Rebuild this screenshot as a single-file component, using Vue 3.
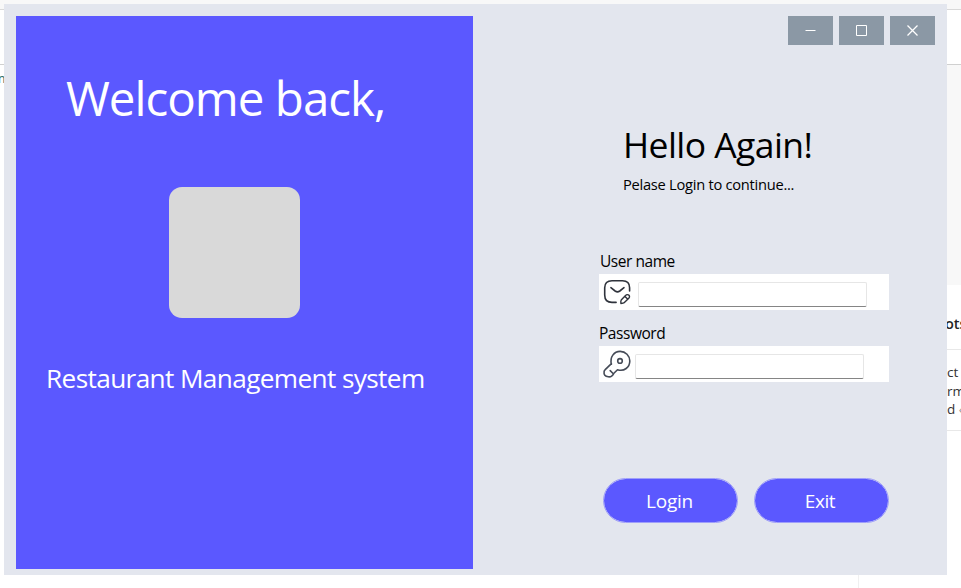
<script setup>
import { ref } from 'vue'

const username = ref('')
const password = ref('')
</script>

<template>
  <div class="desktop">
    <div class="page-behind">
      <div class="tabs-strip"></div>
      <div class="toolbar-strip"></div>
      <div class="body-strip">
        <div class="left-edge">n</div>
        <div class="right-edge">
          <div class="gray-block"></div>
          <div class="side-title">ots</div>
          <div class="side-lines">
            <div>ct</div>
            <div>rm</div>
            <div>d <span class="dim">‹</span></div>
          </div>
          <div class="side-rest"></div>
        </div>
      </div>
      <div class="bottom-strip"></div>
    </div>

    <main class="window">
      <section class="welcome">
        <h1>Welcome back,</h1>
        <div class="logo-box"></div>
        <p>Restaurant Management system</p>
      </section>

      <section class="login">
        <div class="controls">
          <button aria-label="Minimize">
            <svg width="11" height="11" viewBox="0 0 11 11"><path d="M.5 5.5h10" /></svg>
          </button>
          <button aria-label="Maximize">
            <svg width="11" height="11" viewBox="0 0 11 11"><path d="M1 .5h9.5v10H.5V.5H1" /></svg>
          </button>
          <button aria-label="Close">
            <svg class="close" width="11" height="11" viewBox="0 0 11 11"><path d="M.5.5l10 10M10.5.5l-10 10" /></svg>
          </button>
        </div>

        <header class="greeting">
          <h2>Hello Again!</h2>
          <p>Pelase Login to continue...</p>
        </header>

        <form class="form" @submit.prevent>
          <label class="user-label" for="user">User name</label>
          <div class="field">
            <svg class="mail" width="32" height="30" viewBox="0 0 32 30">
              <path d="M15.1 25.4H11Q3.7 25.4 3.7 18.1V10.8Q3.7 3.8 11 3.8H21.5Q28.6 3.8 28.6 10.8V14" />
              <path d="M9.9 10.7L14.1 14Q16.5 15.7 18.8 14L23 10.7" />
              <path class="thin" d="M26.4 17.6Q28.6 17.6 28.5 19.8Q28.3 21 27.3 21.8L23.1 25.8Q22.5 26.4 19.9 26.5Q19.6 23.9 20.2 23.1L24.3 18.8Q25.2 17.6 26.4 17.6ZM24 19.4L26.8 22.2" />
            </svg>
            <input id="user" v-model="username" type="text" />
          </div>
          <label class="pass-label" for="pass">Password</label>
          <div class="field">
            <svg class="key" width="32" height="30" viewBox="0 0 32 30">
              <path d="M10.4 15.2C8.6 8 13.1 2.4 19.1 2.4C24.6 2.4 28.8 6.7 28.8 12C28.8 18.2 23.2 22.9 16.5 20.7L12.9 24.2Q11.3 28.2 7.3 27.8Q2.4 27.1 3.1 22.6Q3.2 21.5 4.2 20.6L10.4 14.6" />
              <path d="M9.2 21.6L11.8 24.2" />
              <circle cx="19" cy="11.9" r="2.3" />
            </svg>
            <input id="pass" v-model="password" type="password" />
          </div>
          <div class="actions">
            <button type="submit">Login</button>
            <button type="button" class="exit">Exit</button>
          </div>
        </form>
      </section>
    </main>
  </div>
</template>

<style>
html,
body {
  margin: 0;
  overflow: hidden;
}
</style>

<style scoped>
* {
  box-sizing: border-box;
}

h1,
h2,
p {
  margin: 0;
  font-weight: 400;
  white-space: nowrap;
}

.desktop {
  position: relative;
  width: 961px;
  height: 588px;
  overflow: hidden;
  background: #fff;
  font-family: "Open Sans", "Noto Sans", sans-serif;
}

.page-behind {
  display: flex;
  flex-direction: column;
  height: 588px;
}

.tabs-strip {
  height: 10px;
  border-bottom: 1px solid #d9d9d9;
  background: #f8f8f8;
}

.toolbar-strip {
  height: 55px;
  border-bottom: 1px solid #d0d0d0;
}

.body-strip {
  display: flex;
  justify-content: space-between;
  height: 510px;
}

.left-edge {
  width: 8px;
  padding-top: 6px;
  color: #28695f;
  font-size: 12px;
  line-height: 16px;
  text-indent: -2px;
}

.right-edge {
  width: 16px;
  color: #333;
  font-size: 14px;
  white-space: nowrap;
}

.gray-block {
  height: 220px;
  background: #f8f8f8;
}

.side-title {
  height: 65px;
  padding-top: 28px;
  border-bottom: 1px solid #e8e8e8;
  color: #242424;
  font-size: 14.5px;
  font-weight: 600;
  line-height: 21px;
}

.side-lines {
  height: 81px;
  padding-top: 13px;
  border-bottom: 1px solid #e8e8e8;
  font-size: 13.5px;
  line-height: 18.5px;
  text-indent: 2px;
}

.dim {
  color: #999;
}

.side-rest {
  height: 144px;
}

.bottom-strip {
  width: 859px;
  height: 13px;
  border-right: 1px solid #f0f0f0;
}

.window {
  position: absolute;
  top: 4px;
  left: 4px;
  display: flex;
  width: 943px;
  height: 571px;
  padding: 12px 12px 6px;
  background: #e3e6ee;
}

.welcome {
  width: 457px;
  padding-top: 50px;
  background: #5b58ff;
  color: #fff;
}

.welcome h1 {
  height: 64px;
  margin-left: 50px;
  font-size: 47.5px;
  letter-spacing: -1px;
  line-height: 64px;
}

.logo-box {
  width: 131px;
  height: 131px;
  margin: 57px 0 42px 153px;
  border-radius: 13px;
  background: #d9d9d9;
}

.welcome p {
  margin-left: 30px;
  font-size: 26.2px;
  letter-spacing: -0.62px;
  line-height: 36px;
}

.login {
  display: flex;
  flex: 1;
  flex-direction: column;
  color: #000;
}

.controls {
  display: flex;
  justify-content: flex-end;
  gap: 6px;
}

.controls button {
  display: flex;
  align-items: center;
  justify-content: center;
  width: 45px;
  height: 29px;
  padding: 0;
  border: 0;
  background: #8b98a5;
}

.controls svg {
  fill: none;
  stroke: #fff;
  stroke-width: 1;
}

.controls .close {
  stroke-width: 1.25;
}

.greeting {
  margin: 75px 0 0 150px;
}

.greeting h2 {
  font-size: 35.5px;
  letter-spacing: -0.57px;
  line-height: 48px;
}

.greeting p {
  margin-top: 6px;
  font-size: 14.67px;
  letter-spacing: -0.26px;
  line-height: 20px;
}

.form {
  display: flex;
  flex-direction: column;
  width: 290px;
  margin: 57px 0 0 126px;
}

.form label {
  height: 23px;
  font-size: 15.5px;
  letter-spacing: -0.45px;
  line-height: 20px;
}

.user-label {
  text-indent: 1px;
}

.pass-label {
  margin-top: 13px;
}

.field {
  display: flex;
  height: 36px;
  padding: 3px 0 0 2px;
  background: #fff;
}

.field svg {
  flex: none;
  fill: none;
  stroke: #2f333c;
  stroke-linecap: round;
  stroke-linejoin: round;
  stroke-width: 1.6;
}

.field .mail {
  margin-right: 5px;
}

.field .key {
  margin-right: 2px;
  stroke: #454b57;
}

.field .thin {
  stroke-width: 1.4;
}

.field input {
  width: 229px;
  height: 25px;
  margin-top: 5px;
  padding: 0 6px;
  border: 1px solid #e6e6e6;
  border-bottom-color: #858585;
  border-radius: 2px;
  outline: 0;
  background: #fff;
  font: 14px "Open Sans", sans-serif;
}

.actions {
  display: flex;
  gap: 16px;
  margin: 96px 0 0 4px;
}

.actions button {
  width: 135px;
  height: 45px;
  padding: 2px 2px 0 0;
  border: 1px solid #9f9ffa;
  border-radius: 22.5px;
  background: #5b58ff;
  background-clip: padding-box;
  color: #fff;
  font: 19px / 41px "Open Sans", sans-serif;
  letter-spacing: -0.2px;
}

.actions .exit {
  padding-right: 3px;
  letter-spacing: -0.4px;
}
</style>
